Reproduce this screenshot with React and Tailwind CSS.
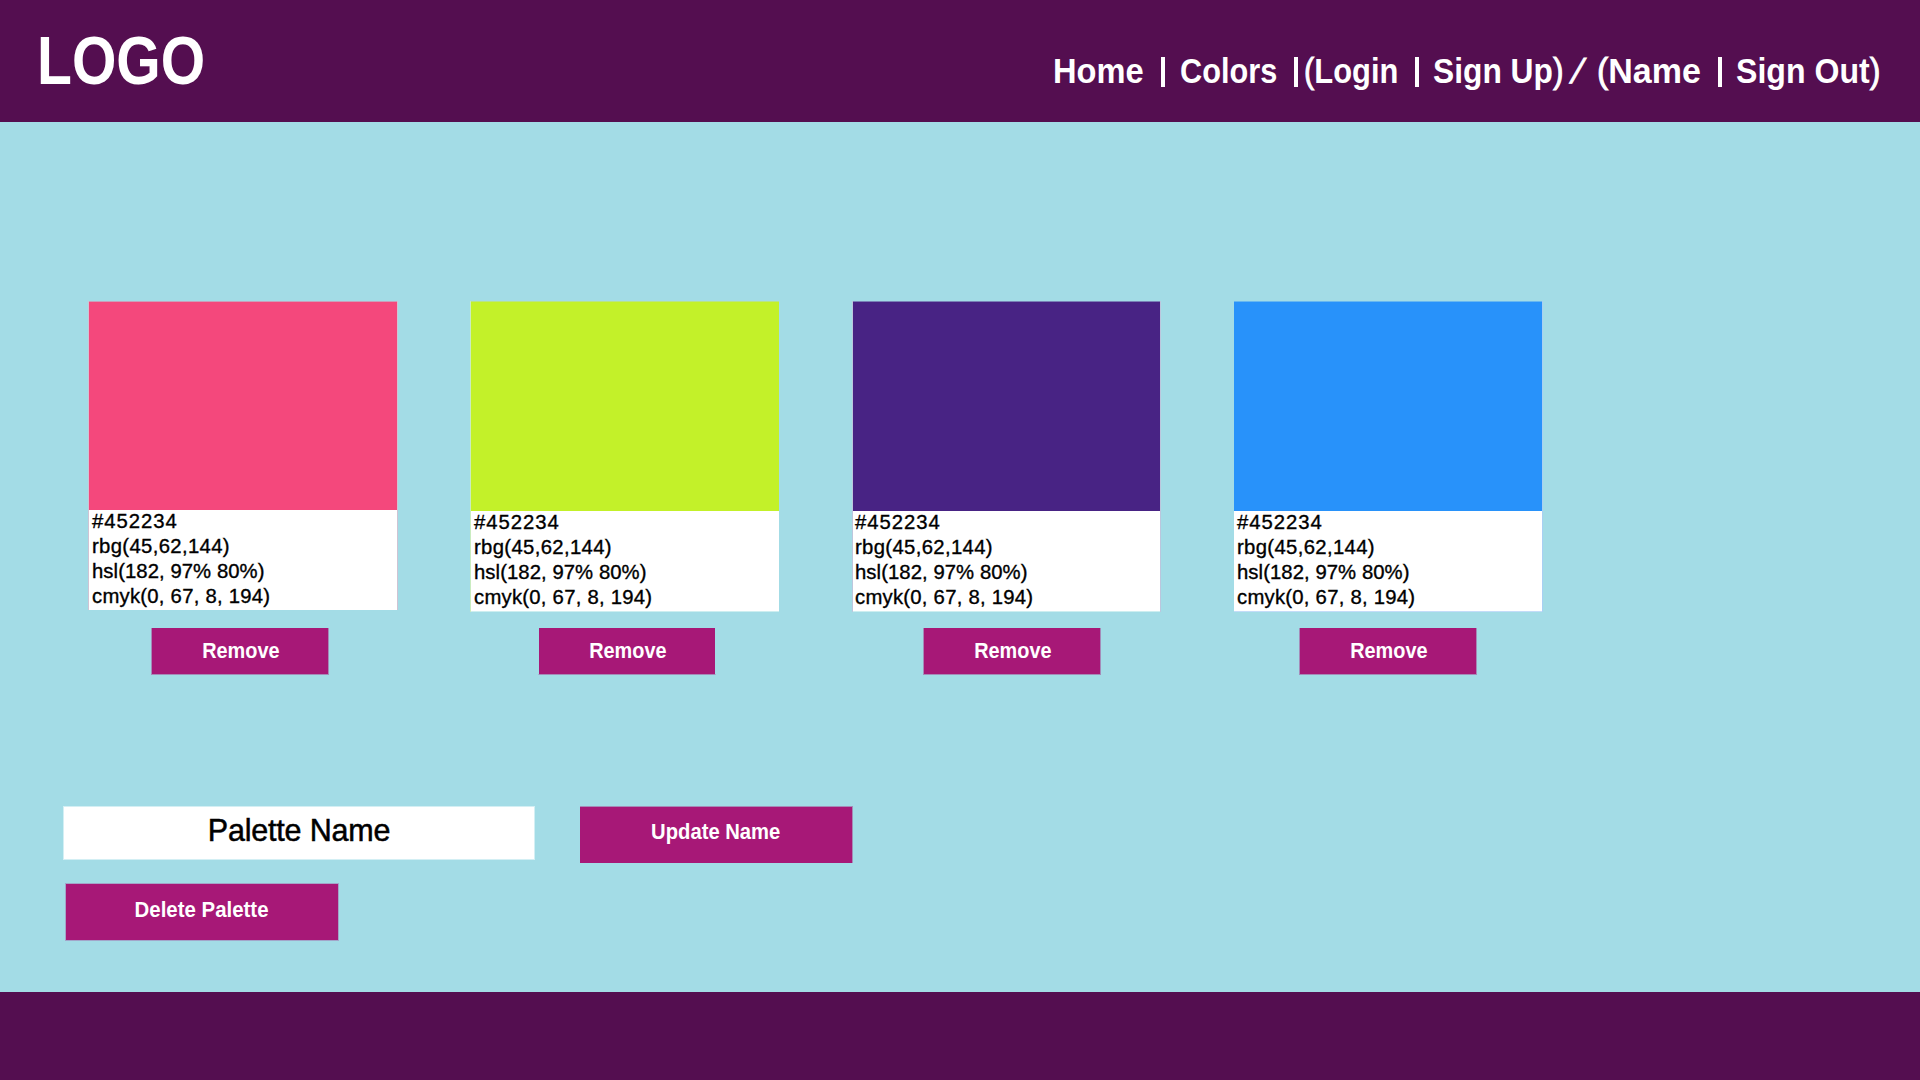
import React from "react";

const VALUES = [
  { text: "#452234", spacing: "tracking-[0.95px]" },
  { text: "rbg(45,62,144)", spacing: "tracking-[0.35px]" },
  { text: "hsl(182, 97% 80%)", spacing: "tracking-[0.07px]" },
  { text: "cmyk(0, 67, 8, 194)", spacing: "tracking-[0.25px]" },
];

const CARDS = [
  {
    column: "ml-[88px] w-[310px]",
    card: "border-x border-[#cfc4d4]",
    swatch: "h-[208px] bg-[#f4487c]",
    edge: "border-[#c9a0bb]",
    values: "h-[100px] pl-[3px]",
    leading: "leading-[25px]",
    gap: "mt-[18px]",
    button: "ml-[63px] border-x",
  },
  {
    column: "ml-[72px] w-[309px]",
    card: "border-l border-[#c9ecc0]",
    swatch: "h-[209px] bg-[#c3f129]",
    edge: "border-[#b7e487]",
    values: "h-[101px] border-b border-[#cdeef0] pl-[3px]",
    leading: "leading-[25.3px]",
    gap: "mt-[16px]",
    button: "ml-[68px] border-x border-x-transparent",
  },
  {
    column: "ml-[73px] w-[309px]",
    card: "border-x border-[#bcc6dd]",
    swatch: "h-[209px] bg-[#482384]",
    edge: "border-[#7a82b7]",
    values: "h-[101px] border-b border-[#cdeef0] pl-[2px]",
    leading: "leading-[25.3px]",
    gap: "mt-[16px]",
    button: "ml-[71px] border-x",
  },
  {
    column: "ml-[73px] w-[309px]",
    card: "border-r border-[#a9cff3]",
    swatch: "h-[209px] bg-[#2892fa]",
    edge: "border-[#68b8f0]",
    values: "h-[101px] border-b border-[#c3dcf8] pl-[3px]",
    leading: "leading-[25.3px]",
    gap: "mt-[16px]",
    button: "ml-[65px] border-x",
  },
];

const NAV = [
  { text: "Home", box: "w-[108px]", fit: "scale-x-[0.945]" },
  { box: "w-[19px]" },
  { text: "Colors", box: "w-[114px]", fit: "scale-x-[0.89]" },
  { box: "w-[10px]" },
  { open: "(", text: "Login", box: "w-[111px]", fit: "scale-x-[0.895]" },
  { box: "w-[18px]" },
  { text: "Sign Up", close: ")", box: "w-[140px]", fit: "scale-x-[0.92]" },
  { open: "/", box: "w-[24px]", fit: "-skew-x-[17deg]" },
  { open: "(", text: "Name", box: "w-[121px]", fit: "scale-x-[0.985]" },
  { box: "w-[18px]" },
  { text: "Sign Out", close: ")", box: "w-[143px]", fit: "scale-x-[0.93]" },
];

function NavItem({ open, text, close, box, fit }) {
  if (!open && !text) {
    return (
      <span className={`${box} flex h-[38px] shrink-0 items-center`}>
        <span className="mt-[2px] h-[30px] w-1 bg-white" />
      </span>
    );
  }
  return (
    <span className={`${box} h-[38px] shrink-0`}>
      <span
        className={`${fit} inline-block origin-left font-bold whitespace-nowrap`}
      >
        <span className="font-normal [-webkit-text-stroke:0.9px_#fff]">{open}</span>
        {text}
        <span className="font-normal [-webkit-text-stroke:0.9px_#fff]">{close}</span>
      </span>
    </span>
  );
}

function ColorCard({ column, card, swatch, edge, values, leading, gap, button }) {
  return (
    <div className={`${column} flex shrink-0 flex-col items-start`}>
      <div className={`${card} w-full`}>
        <div className={`${swatch} ${edge} box-content border-t`} />
        <div className={`${values} bg-white bg-clip-padding`}>
          {VALUES.map((v) => (
            <p
              key={v.text}
              className={`${v.spacing} ${leading} -mb-px h-[26px] -translate-y-px whitespace-nowrap text-[20.3px] text-black [-webkit-text-stroke:0.35px_#000]`}
            >
              {v.text}
            </p>
          ))}
        </div>
      </div>
      <button
        className={`${gap} ${button} h-[47px] w-[178px] border-b border-[#a58bb8] bg-[#a71877] bg-clip-padding pl-px text-[21.5px] leading-[46px] font-bold text-white`}
      >
        <span className="inline-block scale-x-[0.925]">Remove</span>
      </button>
    </div>
  );
}

export default function App() {
  return (
    <div className="flex h-[1080px] w-[1920px] flex-col overflow-hidden bg-[#a3dce6] font-['Liberation_Sans',Arial,sans-serif]">
      <header className="flex h-[122px] shrink-0 justify-between bg-[#540e50] text-white">
        <h1 className="ml-[37px] origin-left scale-x-[0.84] pt-[23px] text-[68px] leading-[74px] font-bold">
          LOGO
        </h1>
        <nav className="mr-[41px] flex pt-[52px] text-[34.5px] leading-[38px]">
          {NAV.map((item, i) => (
            <NavItem key={i} {...item} />
          ))}
        </nav>
      </header>

      <main className="flex grow flex-col">
        <section className="mt-[179px] flex h-[374px] shrink-0">
          {CARDS.map((c) => (
            <ColorCard key={c.column + c.swatch} {...c} />
          ))}
        </section>

        <section className="mt-[131px] ml-[63px] flex items-start">
          <div className="h-[54px] w-[472px] border border-[#d3eff4] bg-white pt-[6px] text-center text-[30.5px] leading-[34px] tracking-[-0.2px] text-black [-webkit-text-stroke:0.5px_#000]">
            Palette Name
          </div>
          <button className="ml-[45px] h-[57px] w-[273px] border-t border-r border-[#a58bb8] bg-[#a71877] bg-clip-padding pb-[5px] text-[21.5px] font-bold text-white">
            <span className="inline-block scale-x-[0.94]">Update Name</span>
          </button>
        </section>
        <button className="mt-[20px] ml-[65px] h-[58px] w-[274px] border border-[#a3a5c9] bg-[#a71877] bg-clip-padding pb-[4px] text-[21.5px] font-bold text-white">
          <span className="inline-block scale-x-[0.95]">Delete Palette</span>
        </button>
      </main>

      <footer className="h-[88px] shrink-0 bg-[#540e50]" />
    </div>
  );
}
